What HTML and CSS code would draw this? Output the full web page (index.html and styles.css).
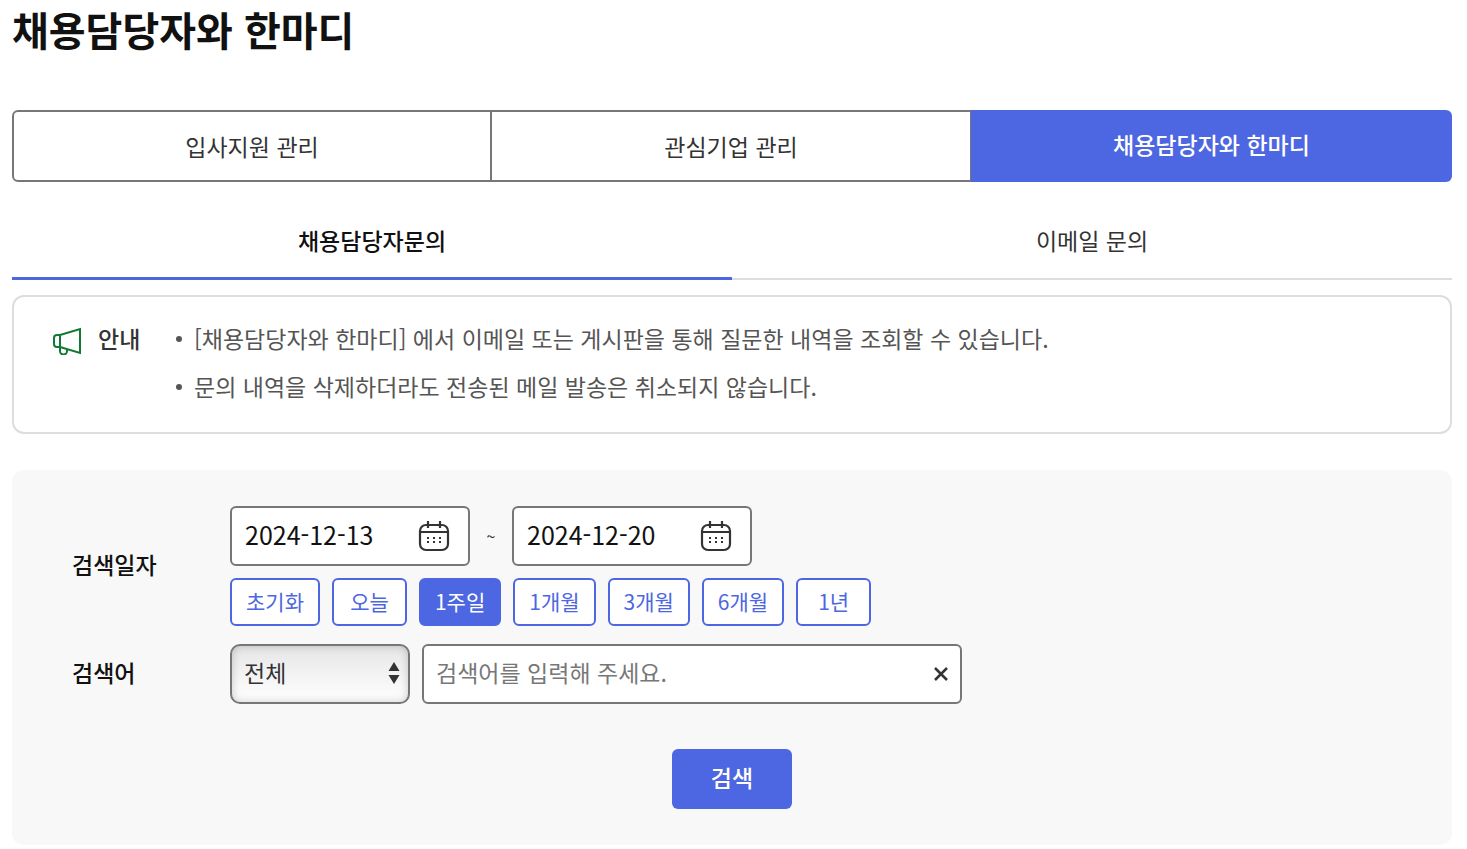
FILE: index.html
```html
<!DOCTYPE html>
<html lang="ko">
<head>
    <meta charset="UTF-8"/>
    <title>채용담당자와 한마디</title>
    <link rel="stylesheet" href="styles.css">
</head>
<body>
<main class="container">
    <h1>채용담당자와 한마디</h1>

    <nav class="main-tabs">
        <a href="#apply">입사지원 관리</a>
        <a href="#company">관심기업 관리</a>
        <a href="#talk" class="active">채용담당자와 한마디</a>
    </nav>

    <nav class="sub-tabs">
        <a href="#manager" class="active">채용담당자문의</a>
        <a href="#email">이메일 문의</a>
    </nav>

    <section class="notice">
        <div class="notice-title">
            <svg width="30" height="34" viewBox="0 -6 30 34" fill="none" stroke="#0f7a33" stroke-width="2">
                <path d="M8 8H5Q2 8 2 11V17Q2 20 5 20H8ZM8 8L28 2V26L8 20"/>
                <path d="M8 20V24A3 3 0 0 0 15 24V22"/>
            </svg>
            <strong>안내</strong>
        </div>
        <ul>
            <li>[채용담당자와 한마디] 에서 이메일 또는 게시판을 통해 질문한 내역을 조회할 수 있습니다.</li>
            <li>문의 내역을 삭제하더라도 전송된 메일 발송은 취소되지 않습니다.</li>
        </ul>
    </section>

    <form class="search" id="searchForm">
        <div class="row">
            <label class="row-label" for="startDate">검색일자</label>
            <div class="row-body">
                <div class="dates">
                    <div class="field date">
                        <input id="startDate" type="text" value="2024-12-13"/>
                        <button type="button" aria-label="시작일 선택">
                            <svg width="32" height="32" viewBox="0 0 32 32" fill="none" stroke="#333" stroke-width="2.200">
                                <rect x="2" y="5" width="28" height="25" rx="6"/>
                                <path d="M2 12H30M10 1V8M22 1V8"/>
                                <path d="M9 18H11M15 18H17M21 18H23M9 22H11M15 22H17M21 22H23"/>
                            </svg>
                        </button>
                    </div>
                    <span class="tilde">~</span>
                    <div class="field date">
                        <input id="endDate" type="text" value="2024-12-20" aria-label="종료일"/>
                        <button type="button" aria-label="종료일 선택">
                            <svg width="32" height="32" viewBox="0 0 32 32" fill="none" stroke="#333" stroke-width="2.200">
                                <rect x="2" y="5" width="28" height="25" rx="6"/>
                                <path d="M2 12H30M10 1V8M22 1V8"/>
                                <path d="M9 18H11M15 18H17M21 18H23M9 22H11M15 22H17M21 22H23"/>
                            </svg>
                        </button>
                    </div>
                </div>
                <div class="periods">
                    <button type="button">초기화</button>
                    <button type="button">오늘</button>
                    <button type="button" class="active">1주일</button>
                    <button type="button">1개월</button>
                    <button type="button">3개월</button>
                    <button type="button">6개월</button>
                    <button type="button">1년</button>
                </div>
            </div>
        </div>

        <div class="row">
            <label class="row-label" for="keyword">검색어</label>
            <div class="keyword">
                <div class="select-wrap">
                    <select aria-label="검색 구분">
                        <option>전체</option>
                    </select>
                    <svg width="12" height="24" viewBox="0 0 12 24" fill="#333">
                        <path d="M6 1L11.500 10H.5ZM6 23L11.500 14H.5Z"/>
                    </svg>
                </div>
                <div class="field text">
                    <input id="keyword" type="text" placeholder="검색어를 입력해 주세요."/>
                    <button type="button" aria-label="지우기">
                        <svg width="14" height="14" viewBox="0 0 14 14" stroke="#333" stroke-width="2.500">
                            <path d="M1 1L13 13M13 1L1 13"/>
                        </svg>
                    </button>
                </div>
            </div>
        </div>

        <button type="submit" class="submit">검색</button>
    </form>
</main>
</body>
</html>
```
FILE: styles.css
```css
* {
    box-sizing: border-box;
}

body {
    margin: 0;
    font-family: 'Noto Sans CJK KR', sans-serif;
    font-size: 23px;
    line-height: 32px;
    color: #333;
    background-color: white;
}

input, select, button {
    font: inherit;
    color: inherit;
}

button {
    padding: 0;
    border: none;
    background: none;
    cursor: pointer;
}

a {
    color: inherit;
    text-decoration: none;
}

svg {
    display: block;
    flex: none;
}

.container {
    padding: 0 15px 4px 12px;
}

h1 {
    margin: 0 0 52px;
    font-size: 40px;
    line-height: 58px;
    font-weight: 700;
    color: #111;
}

.main-tabs {
    display: grid;
    grid-template-columns: repeat(3, 1fr);
    height: 72px;
}

.main-tabs a {
    display: flex;
    align-items: center;
    justify-content: center;
    border: 2px solid #777;
    border-left: none;
}

.main-tabs a:first-child {
    border-left: 2px solid #777;
    border-radius: 6px 0 0 6px;
}

.main-tabs .active {
    margin-left: -1px;
    padding-bottom: 4px;
    border: none;
    border-radius: 0 6px 6px 0;
    background-color: #4d66e1;
    font-weight: 500;
    color: white;
}

.sub-tabs {
    display: flex;
    margin-top: 20px;
}

.sub-tabs a {
    flex: 1;
    height: 78px;
    padding-top: 22px;
    border-bottom: 2px solid #ddd;
    text-align: center;
}

.sub-tabs .active {
    border-bottom: 3px solid #4d66e1;
    font-weight: 500;
    color: #111;
}

.notice {
    display: flex;
    margin-top: 15px;
    padding: 24px 38px 30px;
    border: 2px solid #ddd;
    border-radius: 12px;
}

.notice-title {
    display: flex;
    align-items: center;
    gap: 16px;
    width: 124px;
    height: 34px;
}

.notice-title strong {
    font-weight: 500;
}

.notice ul {
    display: grid;
    gap: 16px;
    margin: 0;
    padding: 1px 0 0;
    list-style: none;
    color: #555;
}

.notice li {
    display: flex;
    align-items: center;
    gap: 12px;
}

.notice li::before {
    content: "";
    width: 6px;
    height: 6px;
    margin-top: 2px;
    border-radius: 50%;
    background-color: #555;
}

.search {
    margin-top: 36px;
    padding: 36px 60px;
    border-radius: 12px;
    background-color: #f8f8f8;
}

.row {
    display: flex;
    align-items: center;
    margin-bottom: 18px;
}

.row-label {
    width: 158px;
    padding-bottom: 4px;
    font-weight: 500;
    color: #111;
}

.dates, .periods, .keyword {
    display: flex;
    align-items: center;
}

.field {
    display: flex;
    align-items: center;
    height: 60px;
    border: 2px solid #777;
    border-radius: 6px;
    background-color: white;
}

.field input {
    flex: 1;
    min-width: 0;
    height: 100%;
    padding: 0 0 4px;
    border: none;
    outline: none;
    background: none;
}

.date {
    width: 240px;
    padding: 0 18px 0 13px;
}

.date input {
    font-size: 25px;
    color: #111;
}

.tilde {
    width: 42px;
    font-size: 16px;
    text-align: center;
}

.periods {
    gap: 12px;
    margin-top: 12px;
}

.periods button {
    height: 48px;
    min-width: 75px;
    padding: 0 14px 2px;
    border: 2px solid #4d66e1;
    border-radius: 6px;
    background-color: white;
    font-size: 21px;
    line-height: 28px;
    color: #4d66e1;
}

.periods .active {
    background-color: #4d66e1;
    color: white;
}

.keyword {
    gap: 12px;
}

.select-wrap {
    position: relative;
}

.select-wrap select {
    display: block;
    width: 180px;
    height: 60px;
    padding: 0 12px 4px;
    border: 2px solid #777;
    border-radius: 10px;
    background: linear-gradient(#e6e6e6, white);
    box-shadow: inset 0 0 8px rgba(0, 0, 0, 0.2);
    appearance: none;
}

.select-wrap svg {
    position: absolute;
    top: 17px;
    right: 10px;
    pointer-events: none;
}

.text {
    width: 540px;
    padding: 0 12px;
}

.text input::placeholder {
    color: #777;
    opacity: 1;
}

.submit {
    display: block;
    width: 120px;
    height: 60px;
    margin: 45px auto 0;
    padding-bottom: 4px;
    border-radius: 6px;
    background-color: #4d66e1;
    font-weight: 500;
    color: white;
}
```
